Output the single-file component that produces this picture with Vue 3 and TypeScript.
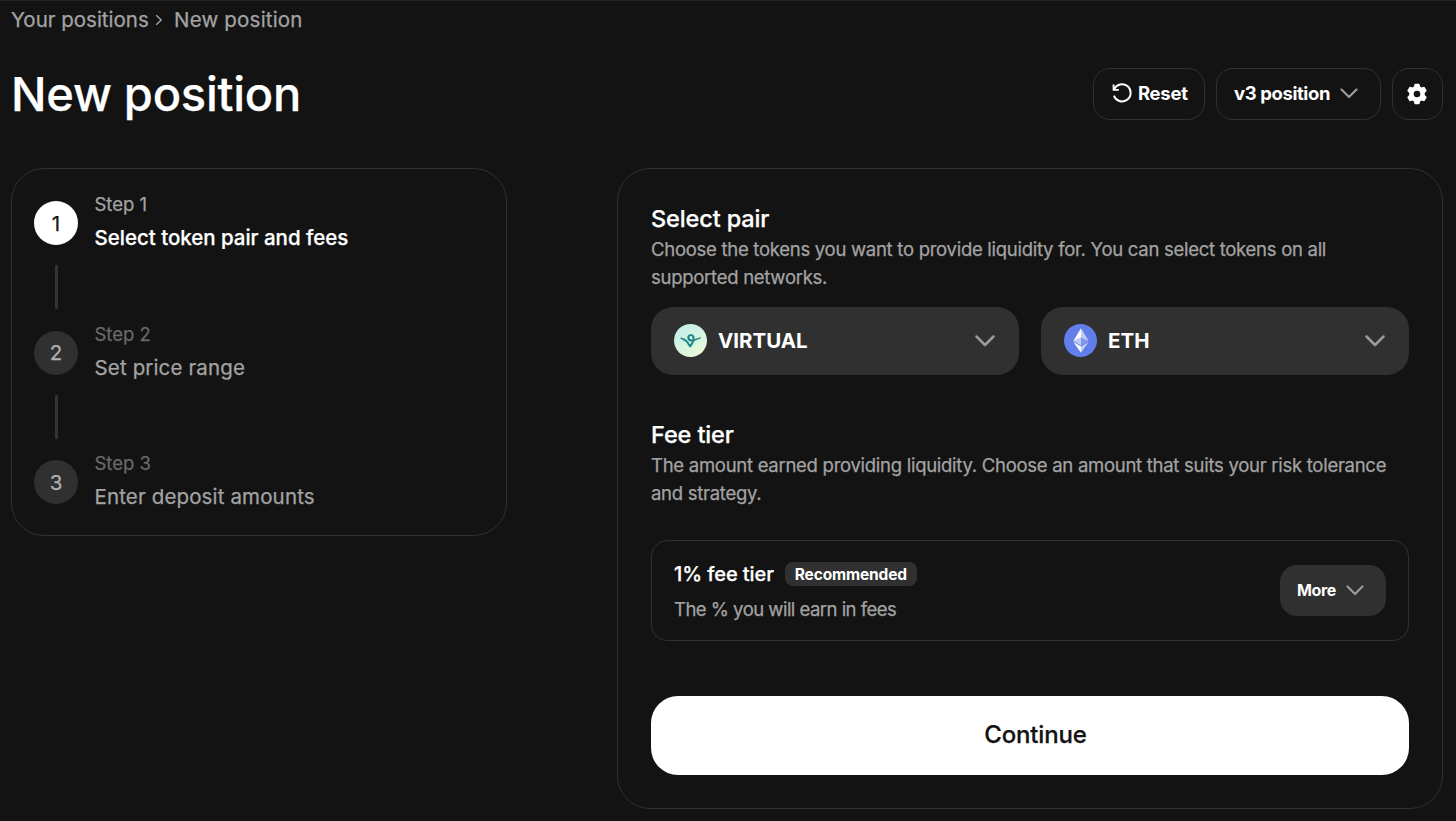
<script setup lang="ts">
import { ref } from 'vue'

interface Step {
  id: number
  label: string
  title: string
}

interface Token {
  symbol: string
  logo: 'virtual' | 'eth'
}

// DATA
const steps: Step[] = [
  { id: 1, label: 'Step 1', title: 'Select token pair and fees' },
  { id: 2, label: 'Step 2', title: 'Set price range' },
  { id: 3, label: 'Step 3', title: 'Enter deposit amounts' }
]

const tokens: Token[] = [
  { symbol: 'VIRTUAL', logo: 'virtual' },
  { symbol: 'ETH', logo: 'eth' }
]

const currentStep = ref<number>(1)

// METHODS
const reset = (): void => {
  currentStep.value = 1
}

const next = (): void => {
  currentStep.value = Math.min(currentStep.value + 1, steps.length)
}
</script>

<template>
  <div class="page">
    <nav class="breadcrumb">
      <a class="crumb-parent">Your positions</a>
      <svg class="crumb-arrow" width="8" height="12" viewBox="0 0 8 12">
        <path d="M1.2 1.2 6.2 6l-5 4.8" />
      </svg>
      <span class="crumb-current">New position</span>
    </nav>

    <header class="header">
      <h1 class="title">New position</h1>
      <div class="actions">
        <button class="btn btn-reset" @click="reset">
          <svg width="20" height="20" viewBox="0 0 20 20">
            <path d="M1.6 1.6v5.3h5.3" />
            <path d="M2.1 6.5A8.6 8.6 0 1 1 1.9 12.6" />
          </svg>
          <span>Reset</span>
        </button>
        <button class="btn btn-version">
          <span>v3 position</span>
          <svg class="chevron" width="18" height="11" viewBox="0 0 18 11">
            <path d="M1.5 1.5 9 9l7.5-7.5" />
          </svg>
        </button>
        <button class="btn btn-settings">
          <svg width="22" height="22" viewBox="0 0 22 22">
            <path
              fill-rule="evenodd"
              d="M9.2.8h3.6a.8.8 0 0 1 .8.6l.5 2.2 1.5.9 2.2-.7a.8.8 0 0 1 .9.4l1.8 3.1a.8.8 0 0 1-.1 1L18.7 9.9v2.2l1.7 1.6a.8.8 0 0 1 .1 1l-1.8 3.1a.8.8 0 0 1-.9.4l-2.2-.7-1.5.9-.5 2.2a.8.8 0 0 1-.8.6H9.2a.8.8 0 0 1-.8-.6l-.5-2.2-1.5-.9-2.2.7a.8.8 0 0 1-.9-.4l-1.8-3.1a.8.8 0 0 1 .1-1l1.7-1.6V9.9L1.6 8.3a.8.8 0 0 1-.1-1l1.8-3.1a.8.8 0 0 1 .9-.4l2.2.7 1.5-.9.5-2.2a.8.8 0 0 1 .8-.6zM11 7.7a3.3 3.3 0 1 0 0 6.6 3.3 3.3 0 0 0 0-6.6z"
            />
          </svg>
        </button>
      </div>
    </header>

    <main class="content">
      <aside class="steps">
        <div
          v-for="step in steps"
          :key="step.id"
          :class="['step', { 'step-active': step.id === currentStep }]"
        >
          <div class="step-rail">
            <div class="step-number">{{ step.id }}</div>
            <div v-if="step.id < steps.length" class="step-line"></div>
          </div>
          <div class="step-text">
            <div class="step-label">{{ step.label }}</div>
            <div class="step-title">{{ step.title }}</div>
          </div>
        </div>
      </aside>

      <section class="panel">
        <h2 class="section-title">Select pair</h2>
        <p class="section-text">
          Choose the tokens you want to provide liquidity for. You can select tokens on all<br />
          supported networks.
        </p>

        <div class="tokens">
          <button v-for="token in tokens" :key="token.symbol" class="token">
            <svg v-if="token.logo === 'virtual'" width="33" height="33" viewBox="0 0 33 33">
              <defs>
                <linearGradient id="virtual-bg" x1="0" y1="0" x2="0.7" y2="1">
                  <stop offset="0" stop-color="#bdebee" />
                  <stop offset="1" stop-color="#e8fbd9" />
                </linearGradient>
              </defs>
              <circle cx="16.5" cy="16.5" r="16.5" fill="url(#virtual-bg)" />
              <g fill="none" stroke="#1f8a8c" stroke-linecap="round" stroke-linejoin="round">
                <path
                  stroke-width="2.1"
                  d="M9.8 15.5c2 .8 3 1.7 3.8 3 .8 1.3 1.4 2.4 2.5 3.8 1.2-1.4 2.6-3.400 3.100-5.300.5-1.500.5-3.100.1-4.200"
                />
                <path
                  stroke-width="2.1"
                  d="M19.3 12.9c-.4-1.500-1.500-2.100-2.700-1.900-1.700.2-2.500 1.600-2.200 3 .3 1.700 1.800 2.600 3.600 2.500"
                />
                <path stroke-width="1.4" d="M7 14.3c.9.2 1.7.5 2.6 1.1M18 16.6c2.800-.1 5.200-2 8.300-2.700" />
              </g>
            </svg>
            <svg v-else width="33" height="33" viewBox="0 0 33 33">
              <circle cx="16.5" cy="16.5" r="16.5" fill="#627eea" />
              <path d="M17 4.3v9.1l7.7 3.5z" fill="#fff" fill-opacity=".6" />
              <path d="M17 4.3 9.3 16.9l7.7-3.5z" fill="#fff" />
              <path d="M17 22.6v6.2l7.7-10.7z" fill="#fff" fill-opacity=".6" />
              <path d="M17 28.8v-6.2l-7.7-4.5z" fill="#fff" />
              <path d="m17 21.4 7.7-4.5-7.7-3.5z" fill="#fff" fill-opacity=".2" />
              <path d="m9.3 16.9 7.7 4.5v-8z" fill="#fff" fill-opacity=".6" />
            </svg>
            <span class="token-symbol">{{ token.symbol }}</span>
            <svg class="chevron chevron-lg" width="20" height="12" viewBox="0 0 20 12">
              <path d="M1.5 1.5 10 10l8.5-8.5" />
            </svg>
          </button>
        </div>

        <h2 class="section-title">Fee tier</h2>
        <p class="section-text">
          The amount earned providing liquidity. Choose an amount that suits your risk tolerance<br />
          and strategy.
        </p>

        <div class="fee">
          <div class="fee-info">
            <div class="fee-head">
              <span class="fee-name">1% fee tier</span>
              <span class="badge">Recommended</span>
            </div>
            <div class="fee-note">The % you will earn in fees</div>
          </div>
          <button class="more">
            <span>More</span>
            <svg class="chevron" width="18" height="11" viewBox="0 0 18 11">
              <path d="M1.5 1.5 9 9l7.5-7.5" />
            </svg>
          </button>
        </div>

        <button class="continue" @click="next">Continue</button>
      </section>
    </main>
  </div>
</template>

<style>
body {
  background-color: #131313;
}
</style>

<style scoped>
.page {
  --border: #303030;
  --surface: #303030;
  --muted: #a3a3a3;
  box-sizing: border-box;
  width: 1456px;
  height: 821px;
  padding: 0 13px 0 11px;
  border-top: 1px solid #232323;
  overflow: hidden;
  background-color: #131313;
  color: #fff;
  font-family: Inter, 'Liberation Sans', sans-serif;
  white-space: nowrap;
  -webkit-text-stroke: 0.25px currentColor;
}

button {
  box-sizing: border-box;
  margin: 0;
  padding: 0;
  border: 0;
  background: none;
  color: inherit;
  font: inherit;
  cursor: pointer;
}

svg {
  display: block;
  flex-shrink: 0;
}

h1,
h2,
p {
  margin: 0;
}

/* breadcrumb */
.breadcrumb {
  display: flex;
  align-items: center;
  height: 37px;
  color: var(--muted);
  font-size: 20.5px;
}

.crumb-parent {
  width: 144px;
}

.crumb-arrow {
  margin: 1px 11px 0 0;
  fill: none;
  stroke: var(--muted);
  stroke-width: 1.4;
}

.crumb-current {
  letter-spacing: 0.2px;
}

/* header */
.header {
  display: flex;
  align-items: center;
  justify-content: space-between;
  height: 52px;
  margin-top: 30px;
}

.title {
  font-size: 47px;
  font-weight: 500;
  letter-spacing: -0.25px;
  line-height: 52px;
}

.actions {
  display: flex;
  gap: 11px;
}

.btn {
  display: flex;
  align-items: center;
  height: 52px;
  border: 1px solid var(--border);
  border-radius: 17px;
  font-size: 18.5px;
  font-weight: 700;
  letter-spacing: -0.4px;
  -webkit-text-stroke: 0;
}

.btn-reset {
  width: 112px;
  padding: 0 0 2px 18px;
  gap: 6px;
  letter-spacing: -0.3px;
}

.btn-reset svg {
  fill: none;
  stroke: #fff;
  stroke-width: 1.9;
}

.btn-version {
  width: 165px;
  padding: 0 22px 2px 17px;
  justify-content: space-between;
}

.btn-settings {
  width: 51px;
  padding: 0 1px 1px 0;
  justify-content: center;
}

.btn-settings svg {
  fill: #fff;
}

.chevron {
  fill: none;
  stroke: #9b9b9b;
  stroke-width: 2.2;
  stroke-linecap: round;
  stroke-linejoin: round;
}

/* layout */
.content {
  display: flex;
  align-items: flex-start;
  justify-content: space-between;
  margin-top: 48px;
}

/* steps */
.steps {
  box-sizing: border-box;
  width: 496px;
  height: 368px;
  padding: 22px 22px 0;
  border: 1px solid var(--border);
  border-radius: 33px;
}

.step {
  display: flex;
  gap: 16.5px;
  height: 129.5px;
}

.step-rail {
  display: flex;
  flex-direction: column;
  align-items: center;
  padding-top: 10px;
}

.step-number {
  display: flex;
  align-items: center;
  justify-content: center;
  width: 44px;
  height: 44px;
  border-radius: 50%;
  background-color: var(--surface);
  color: #b0b0b0;
  font-size: 20.5px;
}

.step-line {
  width: 3px;
  height: 44px;
  margin-top: 20px;
  border-radius: 1px;
  background-color: #343434;
}

.step-label {
  color: #686868;
  font-size: 18.5px;
  line-height: 27px;
}

.step-title {
  margin-top: 6px;
  color: var(--muted);
  font-size: 20.5px;
  letter-spacing: 0.14px;
  line-height: 28px;
}

.step-active .step-number {
  background-color: #fff;
  color: #131313;
}

.step-active .step-label {
  color: var(--muted);
}

.step-active .step-title {
  color: #fff;
  font-weight: 500;
  letter-spacing: -0.02px;
}

/* panel */
.panel {
  box-sizing: border-box;
  width: 826px;
  height: 641px;
  padding: 33px 33px 0;
  border: 1px solid var(--border);
  border-radius: 33px;
}

.section-title {
  font-size: 23.5px;
  font-weight: 500;
  letter-spacing: -0.12px;
  line-height: 33px;
}

.section-text {
  padding-top: 1px;
  color: var(--muted);
  font-size: 18.5px;
  letter-spacing: -0.275px;
  line-height: 27.5px;
}

.tokens {
  display: flex;
  gap: 22px;
  margin: 16px 0 43px;
}

.token {
  display: flex;
  align-items: center;
  width: 368px;
  height: 68px;
  padding: 0 24px 1px 23px;
  border-radius: 22px;
  background-color: var(--surface);
  -webkit-text-stroke: 0;
}

.token-symbol {
  margin-left: 11px;
  font-size: 20.5px;
  font-weight: 700;
}

.chevron-lg {
  margin-left: auto;
  stroke-width: 2.5;
}

/* fee tier */
.fee {
  display: flex;
  align-items: center;
  justify-content: space-between;
  box-sizing: border-box;
  height: 101px;
  margin-top: 33px;
  padding: 0 22px;
  border: 1px solid var(--border);
  border-radius: 16px;
}

.fee-info {
  padding-top: 2px;
}

.fee-head {
  display: flex;
  align-items: center;
  gap: 11px;
  height: 28px;
}

.fee-name {
  font-size: 20px;
  font-weight: 500;
  letter-spacing: -0.08px;
}

.badge {
  box-sizing: border-box;
  width: 132px;
  height: 24px;
  border-radius: 8px;
  background-color: var(--surface);
  font-size: 15.5px;
  font-weight: 700;
  letter-spacing: -0.15px;
  line-height: 25px;
  text-align: center;
  -webkit-text-stroke: 0;
}

.fee-note {
  margin-top: 8px;
  color: var(--muted);
  font-size: 18.5px;
  letter-spacing: -0.52px;
  line-height: 27px;
}

.more {
  display: flex;
  align-items: center;
  justify-content: space-between;
  width: 106px;
  height: 51px;
  padding: 0 22px 1px 17px;
  border-radius: 17px;
  background-color: var(--surface);
  font-size: 16px;
  font-weight: 700;
  letter-spacing: -0.4px;
  -webkit-text-stroke: 0;
}

.continue {
  width: 100%;
  height: 79px;
  margin-top: 55px;
  padding: 0 0 2px 11px;
  border-radius: 27px;
  background-color: #fff;
  color: #131313;
  font-size: 24px;
  font-weight: 500;
  letter-spacing: -0.15px;
}
</style>
